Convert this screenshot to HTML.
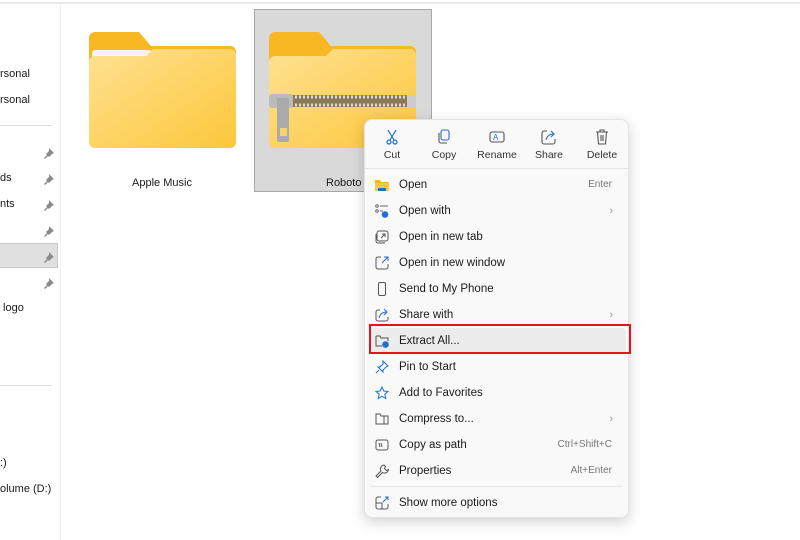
<!DOCTYPE html>
<html><head><meta charset="utf-8"><style>
*{margin:0;padding:0;box-sizing:border-box}
body{width:800px;height:540px;overflow:hidden;background:#fff;font-family:"Segoe UI","Liberation Sans",sans-serif;font-size:11px;color:#1a1a1a;position:relative}
.a{position:absolute;white-space:nowrap}
.menu{position:absolute;left:364px;top:119px;width:265px;height:399px;background:#f9f9f9;border:1px solid #e3e3e3;border-radius:8px;box-shadow:0 4px 14px rgba(0,0,0,.18)}
.tb{position:absolute;top:0;width:52px;text-align:center;font-size:10.5px;color:#333}
.tb svg{display:block;margin:9px auto 4px}
.it{position:absolute;left:0;width:263px;height:26px;line-height:26px}
.it .t{position:absolute;left:34px;font-size:11.5px}
.it .k{position:absolute;right:16px;font-size:10px;color:#777}
.it .c{position:absolute;right:15px;color:#999;font-size:11px}
.it svg{position:absolute;left:10px;top:6px}
</style></head><body>
<div class="a" style="left:0;top:2px;width:800px;height:2px;background:#ececec"></div>
<div class="a" style="left:60px;top:4px;width:1px;height:536px;background:#f0f0f0"></div>
<div class="a" style="left:0;top:68px">rsonal</div>
<div class="a" style="left:0;top:94px">rsonal</div>
<div class="a" style="left:0;top:125px;width:52px;height:1px;background:#e0e0e0"></div>
<div class="a" style="left:0;top:172px">ds</div>
<div class="a" style="left:0;top:198px">nts</div>
<div class="a" style="left:0;top:243px;width:58px;height:25px;background:#e0e0e0;border:1px solid #c8c8c8;border-left:none"></div>
<div class="a" style="left:0;top:302px">&nbsp;logo</div>
<div class="a" style="left:0;top:385px;width:52px;height:1px;background:#e0e0e0"></div>
<div class="a" style="left:0;top:457px">:)</div>
<div class="a" style="left:0;top:483px">olume (D:)</div>
<svg class="a" style="left:44px;top:145px" width="14" height="145" viewBox="0 0 14 145" fill="#8a8a8a">
<g id="p"><path d="M5 3l5 5-2 1-3 3-1-1-3 3-1-1 3-3-1-1 3-3z"/></g>
<use href="#p" y="26"/><use href="#p" y="52"/><use href="#p" y="78"/><use href="#p" y="104"/><use href="#p" y="130"/>
</svg>
<svg class="a" style="left:89px;top:32px" width="147" height="116" viewBox="0 0 147 116">
<defs><linearGradient id="g" x1="0" y1="0" x2="1" y2="1"><stop offset="0" stop-color="#ffe192"/><stop offset="1" stop-color="#fcc73a"/></linearGradient></defs>
<path d="M6 0h44l12 14h79a6 6 0 0 1 6 6v90a6 6 0 0 1-6 6H6a6 6 0 0 1-6-6V6a6 6 0 0 1 6-6z" fill="#f7b824"/>
<rect x="3" y="18" width="60" height="12" rx="3" fill="#f4f4f4"/>
<path d="M0 30a6 6 0 0 1 6-6h51l7-7h77a6 6 0 0 1 6 6v87a6 6 0 0 1-6 6H6a6 6 0 0 1-6-6z" fill="url(#g)"/>
</svg>
<div class="a" style="left:100px;top:177px;width:124px;text-align:center">Apple Music</div>
<div class="a" style="left:254px;top:9px;width:178px;height:183px;background:#d9d9d9;border:1px solid #a8a8a8"></div>
<svg class="a" style="left:269px;top:32px" width="147" height="116" viewBox="0 0 147 116">
<path d="M6 0h44l12 14h79a6 6 0 0 1 6 6v90a6 6 0 0 1-6 6H6a6 6 0 0 1-6-6V6a6 6 0 0 1 6-6z" fill="#f7b824"/>
<path d="M0 30a6 6 0 0 1 6-6h51l7-7h77a6 6 0 0 1 6 6v87a6 6 0 0 1-6 6H6a6 6 0 0 1-6-6z" fill="url(#g)"/>
<rect x="22" y="63" width="120" height="12" fill="#8a7a55"/>
<path d="M22 65h120M22 73h120" stroke="#ddd" stroke-width="3" stroke-dasharray="2 2"/>
<rect x="0" y="62" width="24" height="14" rx="3" fill="#bbb"/>
<rect x="8" y="66" width="12" height="44" rx="2" fill="#aaa"/>
<rect x="11" y="96" width="7" height="8" fill="#f8d26a"/>
<rect x="138" y="63" width="9" height="12" fill="#ccc"/>
</svg>
<div class="a" style="left:326px;top:177px">Roboto</div>
<div class="menu">
<div class="tb" style="left:1px"><svg width="14" height="16" viewBox="0 0 14 16" fill="none" stroke="#1f6fd1" stroke-width="1.2"><path d="M3 1l6 10M11 1l-6 10"/><circle cx="4" cy="13" r="2"/><circle cx="10" cy="13" r="2"/></svg>Cut</div>
<div class="tb" style="left:53px"><svg width="14" height="16" viewBox="0 0 14 16" fill="none" stroke="#555" stroke-width="1.1"><rect x="4" y="1" width="8" height="10" rx="2" stroke="#1f6fd1"/><path d="M2 4v8a2 2 0 0 0 2 2h6"/></svg>Copy</div>
<div class="tb" style="left:106px"><svg width="16" height="16" viewBox="0 0 16 16" fill="none" stroke="#555" stroke-width="1.1"><rect x="1" y="3" width="14" height="10" rx="2"/><text x="4" y="11" font-size="8" fill="#1f6fd1" stroke="none" font-family="Liberation Sans">A</text></svg>Rename</div>
<div class="tb" style="left:158px"><svg width="16" height="16" viewBox="0 0 16 16" fill="none" stroke="#555" stroke-width="1.1"><path d="M6 2H3a2 2 0 0 0-2 2v9a2 2 0 0 0 2 2h9a2 2 0 0 0 2-2v-3"/><path d="M5 11c1-4 4-6 8-6M10 2l3 3-3 3" stroke="#1f6fd1"/></svg>Share</div>
<div class="tb" style="left:211px"><svg width="14" height="16" viewBox="0 0 14 16" fill="none" stroke="#555" stroke-width="1.1"><path d="M1 3h12M5 3V1h4v2M2.5 3l1 12h7l1-12M6 6v6M8 6v6"/></svg>Delete</div>
<div class="a" style="left:0;top:48px;width:263px;height:1px;background:#e5e5e5"></div>
<div class="it" style="top:52px"><svg width="14" height="14" viewBox="0 0 14 14"><path d="M0 2h5l1 2h8v9H0z" fill="#f7b824"/><rect x="0" y="5" width="14" height="8" fill="#fcc73a"/><rect x="3" y="10" width="8" height="3" fill="#1f6fd1"/></svg><span class="t">Open</span><span class="k">Enter</span></div>
<div class="it" style="top:78px"><svg width="14" height="14" viewBox="0 0 14 14" fill="none" stroke="#666"><circle cx="2" cy="2" r="1.3"/><circle cx="2" cy="7" r="1.3"/><path d="M5 2h8M5 7h3"/><circle cx="10" cy="10.5" r="3.3" fill="#1f6fd1" stroke="none"/></svg><span class="t">Open with</span><span class="c">›</span></div>
<div class="it" style="top:104px"><svg width="14" height="14" viewBox="0 0 14 14" fill="none" stroke="#555"><rect x="2" y="1" width="11" height="10" rx="2"/><path d="M1 4v7a2 2 0 0 0 2 2h7M6 8l4-4M7 4h3v3"/></svg><span class="t">Open in new tab</span></div>
<div class="it" style="top:130px"><svg width="14" height="14" viewBox="0 0 14 14" fill="none" stroke="#555"><path d="M6 1H3a2 2 0 0 0-2 2v8a2 2 0 0 0 2 2h8a2 2 0 0 0 2-2V8"/><path d="M7 7l6-6M9 1h4v4" stroke="#1f6fd1"/></svg><span class="t">Open in new window</span></div>
<div class="it" style="top:156px"><svg width="14" height="14" viewBox="0 0 14 14" fill="none" stroke="#555"><rect x="3.5" y="0.5" width="7" height="13" rx="1.5"/></svg><span class="t">Send to My Phone</span></div>
<div class="it" style="top:182px"><svg width="14" height="14" viewBox="0 0 14 14" fill="none" stroke="#555"><path d="M5 2H3a2 2 0 0 0-2 2v7a2 2 0 0 0 2 2h8a2 2 0 0 0 2-2V9"/><path d="M4 10c1-4 4-6 8-6M9 1l3 3-3 3" stroke="#1f6fd1"/></svg><span class="t">Share with</span><span class="c">›</span></div>
<div class="it" style="top:208px;left:5px;width:256px;background:#ececec;border-radius:4px"><svg style="left:5px" width="14" height="14" viewBox="0 0 14 14" fill="none" stroke="#555"><path d="M1 2h4l1 2h7v3M1 2v10h6"/><circle cx="10.5" cy="10.5" r="3.3" fill="#1f6fd1" stroke="none"/></svg><span class="t" style="left:29px">Extract All...</span></div>
<div class="it" style="top:234px"><svg width="14" height="14" viewBox="0 0 14 14" fill="none" stroke="#1f6fd1"><path d="M8 1l5 5-2 1-3 3 0 2-5-5 2 0 3-3zM4 10l-3 3"/></svg><span class="t">Pin to Start</span></div>
<div class="it" style="top:260px"><svg width="14" height="14" viewBox="0 0 14 14" fill="none" stroke="#1f6fd1"><path d="M7 1l1.8 4 4.2.4-3.2 2.8 1 4.3L7 10.3 3.2 12.5l1-4.3L1 5.4 5.2 5z"/></svg><span class="t">Add to Favorites</span></div>
<div class="it" style="top:286px"><svg width="14" height="14" viewBox="0 0 14 14" fill="none" stroke="#555"><path d="M1 2h4l1 2h7v8H1zM9 4v8"/></svg><span class="t">Compress to...</span><span class="c">›</span></div>
<div class="it" style="top:312px"><svg width="14" height="14" viewBox="0 0 14 14" fill="none" stroke="#555"><rect x="1" y="2" width="12" height="10" rx="2"/><path d="M4 5l1 4M6 5l1 4"/></svg><span class="t">Copy as path</span><span class="k">Ctrl+Shift+C</span></div>
<div class="it" style="top:338px"><svg width="14" height="14" viewBox="0 0 14 14" fill="none" stroke="#555"><path d="M9 1a4 4 0 0 0-3 6l-5 5 1.5 1.5 5-5a4 4 0 0 0 6-3l-2 1-2-2 1-2z"/></svg><span class="t">Properties</span><span class="k">Alt+Enter</span></div>
<div class="a" style="left:5px;top:366px;width:253px;height:1px;background:#e5e5e5"></div>
<div class="it" style="top:370px"><svg width="14" height="14" viewBox="0 0 14 14" fill="none" stroke="#555"><path d="M6 1H3a2 2 0 0 0-2 2v8a2 2 0 0 0 2 2h8a2 2 0 0 0 2-2V8M1 7h6v6"/><path d="M8 6l5-5M10 1h3v3" stroke="#1f6fd1"/></svg><span class="t">Show more options</span></div>
</div>
<div class="a" style="left:369px;top:324px;width:262px;height:30px;border:2px solid #e8121c"></div>
</body></html>
